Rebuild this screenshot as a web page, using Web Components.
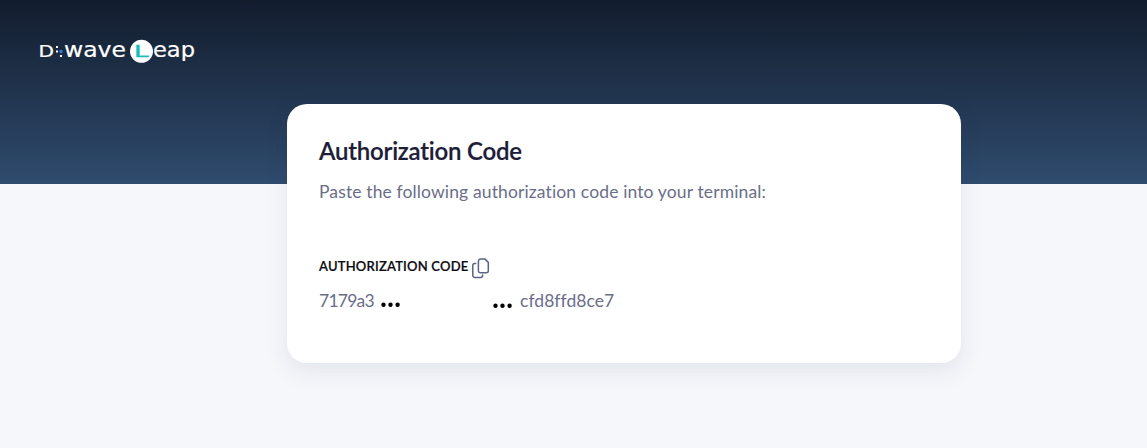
<!DOCTYPE html>
<html lang="en">
<head>
<meta charset="utf-8">
<title>Authorization Code</title>
<style>
html,body{margin:0;height:100%;background:#f5f7fb}
body{font-family:Lato,"Open Sans",sans-serif;overflow:hidden}
</style>
</head>
<body>
<auth-page>
  <leap-logo slot="logo"></leap-logo>
  <auth-card>
    <span slot="title">Authorization Code</span>
    <span slot="message">Paste the following authorization code into your terminal:</span>
    <code-field label="AUTHORIZATION CODE" start="7179a3" end="cfd8ffd8ce7"></code-field>
  </auth-card>
</auth-page>
<script>
const define = (name, html, setup) => customElements.define(name, class extends HTMLElement {
  constructor() {
    super();
    this.attachShadow({mode: 'open'}).innerHTML = html;
  }
  connectedCallback() { if (setup) setup(this, this.shadowRoot); }
});

define('leap-logo', `
<style>:host{display:block;width:156px;height:28px}svg{display:block}text{fill:#fff;stroke:#fff;stroke-width:.2px;font-family:"DejaVu Sans",sans-serif}</style>
<svg width="156" height="28" viewBox="39 38 156 28" role="img" aria-label="D-Wave Leap">
  <text x="38.5" y="57" font-size="15" textLength="15.5" lengthAdjust="spacingAndGlyphs">D</text>
  <g fill="#fff"><rect x="56" y="46" width="2" height="2"/><rect x="56" y="50.5" width="2" height="2"/><rect x="60" y="55" width="2" height="2"/></g>
  <rect x="59.5" y="50" width="3" height="3" fill="#2c7de0"/>
  <text x="64" y="57" font-size="20.5" textLength="62" lengthAdjust="spacingAndGlyphs">wave</text>
  <circle cx="141.5" cy="51.3" r="11.5" fill="#fff"/>
  <text x="134" y="57" font-size="15" textLength="14.5" lengthAdjust="spacingAndGlyphs" style="fill:#17bebb;stroke:#17bebb;stroke-width:.4px">L</text>
  <text x="153" y="57" font-size="20.5" textLength="42" lengthAdjust="spacingAndGlyphs">eap</text>
</svg>`);

define('copy-icon', `
<style>:host{display:block;width:18px;height:21px}svg{display:block}</style>
<svg width="18" height="21" viewBox="0 0 18 21" fill="none" stroke="#5b6580" stroke-width="1.5" stroke-linejoin="round" stroke-linecap="round">
  <path d="M8.4 1.1H13L16.3 4.4V12.8A2 2 0 0 1 14.3 14.8H8.4A2 2 0 0 1 6.4 12.8V3.1A2 2 0 0 1 8.4 1.1Z"/>
  <path d="M3.7 5.5H2.7A2 2 0 0 0 .8 7.5V17.5A2 2 0 0 0 2.8 19.5H8.6A2 2 0 0 0 10.6 17.5V17"/>
</svg>`);

define('ellipsis-dots', `
<style>:host{display:block}svg{display:block}</style>
<svg width="20" height="6" viewBox="0 0 20 6"><circle cx="2.5" cy="2.8" r="2.2"/><circle cx="9.5" cy="2.8" r="2.2"/><circle cx="16.6" cy="2.8" r="2.2"/></svg>`);

define('code-field', `
<style>
:host{display:block}
.label{display:flex;height:21px;align-items:flex-start;gap:4px}
b{font-size:13px;line-height:16px;font-weight:600;color:#0b0b14;width:149px;white-space:nowrap;letter-spacing:.2px;-webkit-text-stroke:.2px #0b0b14}
.value{display:flex;height:24px;margin-top:10px;font-size:17.5px;line-height:24px;color:#6a6e88;font-weight:400}
.a{width:62px;letter-spacing:-.75px}.z{letter-spacing:.05px}
ellipsis-dots{padding-top:13px;width:112px}.last{width:27px;padding-top:14px}
</style>
<div class="label"><b></b><copy-icon></copy-icon></div>
<div class="value"><span class="a"></span><ellipsis-dots></ellipsis-dots><ellipsis-dots class="last"></ellipsis-dots><span class="z"></span></div>`,
(el, root) => {
  root.querySelector('b').textContent = el.getAttribute('label');
  root.querySelector('.a').textContent = el.getAttribute('start');
  root.querySelector('.z').textContent = el.getAttribute('end');
});

define('auth-card', `
<style>
:host{display:block;box-sizing:border-box;width:674px;height:259px;margin:38px 0 0 287px;padding:31px 32px;background:#fff;border-radius:20px;box-shadow:0 8px 24px rgba(40,40,90,.09)}
h1{margin:0;font-size:24px;line-height:32px;font-weight:600;color:#1d1d38;letter-spacing:-.22px;white-space:nowrap;-webkit-text-stroke:.2px #1d1d38}
p{margin:13px 0 54px;font-size:17.5px;line-height:24px;color:#6a6e88;white-space:nowrap;letter-spacing:.13px}
</style>
<h1><slot name="title"></slot></h1><p><slot name="message"></slot></p><slot></slot>`);

define('auth-page', `
<style>
:host{display:block;box-sizing:border-box;height:448px;padding-top:38px;background:linear-gradient(#121c2d,#2f4c6e) 0 0/100% 184px no-repeat #f5f7fb}
header{padding-left:39px}
</style>
<header><slot name="logo"></slot></header><main><slot></slot></main>`);
</script>
</body>
</html>
